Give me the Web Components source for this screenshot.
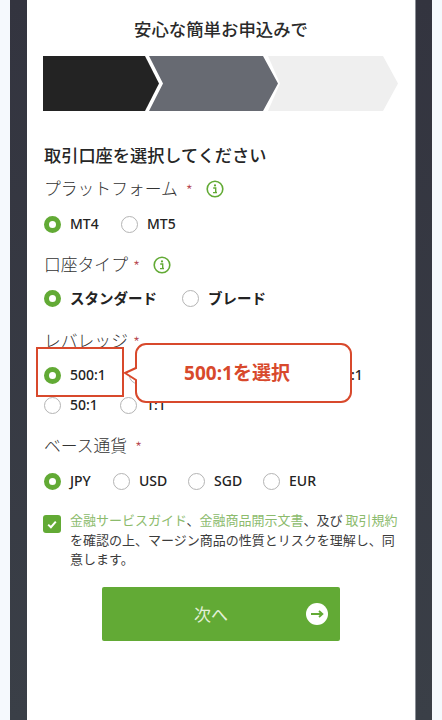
<!DOCTYPE html>
<html lang="ja">
<head>
<meta charset="utf-8">
<title>口座開設</title>
<style>
  html, body { margin: 0; padding: 0; height: 720px; overflow: hidden; background: #f5f9fd; }
  body { font-family: "Noto Sans", "Noto Sans CJK JP", sans-serif; color: #222; }
</style>
</head>
<body>
<app-shell>
  <h-title>安心な簡単お申込みで</h-title>
  <step-bar></step-bar>
  <section-head>取引口座を選択してください</section-head>

  <form-field label="プラットフォーム" gap="8" info info-gap="13" top="8" mt="14" h="22">
    <radio-item checked w="77">MT4</radio-item>
    <radio-item>MT5</radio-item>
  </form-field>

  <form-field label="口座タイプ" gap="5" info info-gap="13" top="13" mt="12" h="24">
    <radio-item checked bold w="138">スタンダード</radio-item>
    <radio-item bold>ブレード</radio-item>
  </form-field>

  <form-field label="レバレッジ" gap="5" top="13" mt="13" h="30">
    <radio-item checked w="85">500:1</radio-item>
    <radio-item w="222"></radio-item>
    <radio-item bare w="47">:1</radio-item>
    <radio-item w="76">50:1</radio-item>
    <radio-item>1:1</radio-item>
  </form-field>

  <form-field label="ベース通貨" gap="8" top="5" mt="14" h="22">
    <radio-item checked w="69">JPY</radio-item>
    <radio-item w="75">USD</radio-item>
    <radio-item w="75">SGD</radio-item>
    <radio-item>EUR</radio-item>
  </form-field>

  <agree-check><a>金融サービスガイド</a>、<a>金融商品開示文書</a>、及び <a>取引規約</a><br>を確認の上、マージン商品の性質とリスクを理解し、同意します。</agree-check>
  <next-button>次へ</next-button>
  <select-callout>500:1を選択</select-callout>
</app-shell>

<script>
  function tpl(html) {
    const t = document.createElement("template");
    t.innerHTML = html;
    return t;
  }

  class AppShell extends HTMLElement {
    constructor() {
      super();
      this.attachShadow({ mode: "open" }).appendChild(AppShell.t.content.cloneNode(true));
    }
  }
  AppShell.t = tpl(`
    <style>
      :host { display: block; width: 422px; height: 720px; margin-left: 10px;
        background: linear-gradient(#33343f, #3a3f47); padding: 0 17px; box-sizing: border-box; }
      .page { position: relative; background: #fff; height: 720px; padding: 0 17px;
        border-right: 1px solid #8b8f96; box-sizing: border-box; width: 389px; }
    </style>
    <div class="page"><slot></slot></div>`);
  customElements.define("app-shell", AppShell);

  class HTitle extends HTMLElement {
    constructor() {
      super();
      this.attachShadow({ mode: "open" }).innerHTML = `
        <style>
          :host { display: block; padding-top: 16px; height: 40px; text-align: center;
            font: 500 17.4px/25px "Noto Sans CJK JP", sans-serif; color: #2a2a2a; }
        </style><slot></slot>`;
    }
  }
  customElements.define("h-title", HTitle);

  class StepBar extends HTMLElement {
    constructor() {
      super();
      this.attachShadow({ mode: "open" }).innerHTML = `
        <style>
          :host { display: block; height: 55px; margin: 0 0 32px -1px; }
          svg { display: block; }
        </style>
        <svg width="357" height="55" viewBox="0 0 357 55">
          <polygon points="0,0 102,0 116,27.5 102,55 0,55" fill="#232323"/>
          <polygon points="106,0 220,0 235,27.5 220,55 106,55 120,27.5" fill="#676a72"/>
          <polygon points="225,0 340,0 355,27.5 340,55 225,55 237,27.5" fill="#efefef"/>
        </svg>`;
    }
  }
  customElements.define("step-bar", StepBar);

  class SectionHead extends HTMLElement {
    constructor() {
      super();
      this.attachShadow({ mode: "open" }).innerHTML = `
        <style>
          :host { display: block; height: 24px;
            font: 500 17.2px/24px "Noto Sans CJK JP", sans-serif; color: #262626; }
        </style><slot></slot>`;
    }
  }
  customElements.define("section-head", SectionHead);

  class FormField extends HTMLElement {
    constructor() {
      super();
      const gap = this.getAttribute("gap") || 0;
      const top = this.getAttribute("top") || 0;
      const mt = this.getAttribute("mt") || 0;
      const infoGap = this.getAttribute("info-gap") || 0;
      const rowH = this.getAttribute("h") || 22;
      const info = this.hasAttribute("info") ? `
        <svg class="info" width="18" height="18" viewBox="0 0 18 18">
          <circle cx="9" cy="9" r="7.8" fill="none" stroke="#62aa35" stroke-width="1.6"/>
          <circle cx="9" cy="5.4" r="1.1" fill="#62aa35"/>
          <path d="M7.2 8h2.5v4.4h1.2M7 12.6h4" fill="none" stroke="#62aa35" stroke-width="1.4"/>
        </svg>` : "";
      this.attachShadow({ mode: "open" }).innerHTML = `
        <style>
          :host { display: block; margin-top: ${top}px; }
          .label { display: flex; align-items: center; height: 27px;
            font: 300 16.8px/27px "Noto Sans CJK JP", sans-serif; color: #333; }
          .req { color: #b5444e; font-size: 16px; margin: 3px 0 0 ${gap}px; }
          .info { margin-left: ${infoGap}px; }
          .opts { display: flex; flex-wrap: wrap; margin-top: ${mt}px; }
          ::slotted(radio-item) { height: ${rowH}px; }
        </style>
        <div class="label">${this.getAttribute("label")}<span class="req">*</span>${info}</div>
        <div class="opts"><slot></slot></div>`;
    }
  }
  customElements.define("form-field", FormField);

  class RadioItem extends HTMLElement {
    constructor() {
      super();
      const w = this.getAttribute("w");
      this.attachShadow({ mode: "open" }).innerHTML = `
        <style>
          :host { display: flex; align-items: flex-start; box-sizing: border-box;
            ${w ? `width: ${w}px;` : ""} }
          .dot { width: 17px; height: 17px; border-radius: 50%; border: 1px solid #b4b4b4;
            box-sizing: border-box; background: #fff; margin-right: 9px; flex: none; }
          :host([checked]) .dot { border: 5.5px solid #62aa35; }
          :host([bare]) .dot { display: none; }
          .txt { font: 500 14px/16px "Noto Sans", "Noto Sans CJK JP", sans-serif; color: #232323; white-space: nowrap; }
          :host([bold]) .txt { font: 700 14.5px/16px "Noto Sans CJK JP", sans-serif; }
        </style>
        <span class="dot"></span><span class="txt"><slot></slot></span>`;
    }
  }
  customElements.define("radio-item", RadioItem);

  class AgreeCheck extends HTMLElement {
    constructor() {
      super();
      this.attachShadow({ mode: "open" }).innerHTML = `
        <style>
          :host { display: flex; margin: 15px 0 0 -1px; width: 357px;
            font: 400 13px/19.5px "Noto Sans CJK JP", sans-serif; color: #3c3c3c; }
          .box { flex: none; width: 18px; height: 18px; border-radius: 3px; background: #62aa35;
            margin: 5px 9px 0 0; display: flex; align-items: center; justify-content: center; }
          ::slotted(a) { color: #8cbb6d; }
        </style>
        <span class="box"><svg width="10" height="9" viewBox="0 0 10 9"><path d="M1.2 4.6 3.9 7.2 8.8 1.6" fill="none" stroke="#fff" stroke-width="2"/></svg></span>
        <div><slot></slot></div>`;
    }
  }
  customElements.define("agree-check", AgreeCheck);

  class NextButton extends HTMLElement {
    constructor() {
      super();
      this.attachShadow({ mode: "open" }).innerHTML = `
        <style>
          :host { display: flex; align-items: center; justify-content: center; position: relative;
            width: 238px; height: 54px; margin: 18.5px 0 0 58px; background: #62aa35; border-radius: 2px;
            font: 400 17px/24px "Noto Sans CJK JP", sans-serif; color: #e2f0d8; box-sizing: border-box; padding-right: 20px; }
          svg { position: absolute; right: 12px; top: 16px; }
        </style>
        <slot></slot>
        <svg width="22" height="22" viewBox="0 0 22 22">
          <circle cx="11" cy="11" r="11" fill="#fff"/>
          <path d="M5 11h11M13 8l3.4 3-3.4 3" fill="none" stroke="#62aa35" stroke-width="1.8"/>
        </svg>`;
    }
  }
  customElements.define("next-button", NextButton);

  class SelectCallout extends HTMLElement {
    constructor() {
      super();
      this.attachShadow({ mode: "open" }).innerHTML = `
        <style>
          :host { position: absolute; left: 9px; top: 343px; width: 316px; height: 62px; display: block; }
          .frame { position: absolute; left: 0; top: 4px; width: 88px; height: 50px; box-sizing: border-box;
            border: 2.5px solid #d8492c; }
          svg { position: absolute; left: 0; top: 0; overflow: visible; }
          .label { position: absolute; left: 99px; top: 0; width: 216px; height: 60px; box-sizing: border-box; padding-right: 12px;
            display: flex; align-items: center; justify-content: center;
            font: 700 19px/24px "Noto Sans", "Noto Sans CJK JP", sans-serif; color: #d8492c; }
        </style>
        <div class="frame"></div>
        <svg width="316" height="60" viewBox="0 0 316 60">
          <path d="M110 1H305a10 10 0 0 1 10 10V49a10 10 0 0 1-10 10H110a10 10 0 0 1-10-10V37L89 30l11-5V11a10 10 0 0 1 10-10Z"
            fill="#fff" stroke="#d8492c" stroke-width="2"/>
        </svg>
        <div class="label"><slot></slot></div>`;
    }
  }
  customElements.define("select-callout", SelectCallout);
</script>
</body>
</html>
